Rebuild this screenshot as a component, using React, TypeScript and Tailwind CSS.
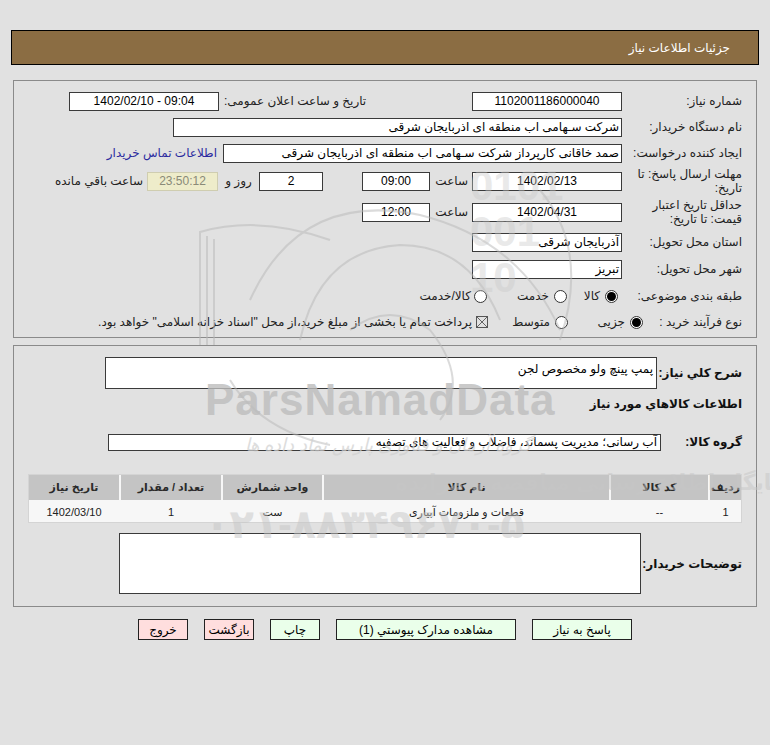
import React from "react";

function Box({ className = "", children, ltr }: { className?: string; children?: React.ReactNode; ltr?: boolean }) {
  return (
    <div dir={ltr ? "ltr" : undefined} className={`shrink-0 h-[19px] bg-white border border-[#3a3a3a] flex items-center text-[12px] text-black whitespace-nowrap overflow-hidden ${className}`}>
      {children}
    </div>
  );
}

function Radio({ checked }: { checked?: boolean }) {
  return (
    <span className="w-[13px] h-[13px] rounded-full border border-[#333] bg-white flex items-center justify-center shrink-0">
      {checked ? <span className="w-[9px] h-[9px] rounded-full bg-black block" /> : null}
    </span>
  );
}

function Label({ className = "", children }: { className?: string; children?: React.ReactNode }) {
  return <div className={`shrink-0 text-[12px] text-[#222] leading-[14px] whitespace-nowrap ${className}`}>{children}</div>;
}

export default function App() {
  return (
    <div dir="rtl" className="relative w-[770px] h-[745px] bg-[#e1e1e1] pt-[30px] font-['Liberation_Sans','DejaVu_Sans',sans-serif] overflow-hidden">
      {/* header */}
      <div className="mx-[11px] h-[35px] bg-[#8b6d43] border border-black flex items-center pr-[28px] text-[12px] text-white">
        جزئیات اطلاعات نیاز
      </div>

      {/* panel 1 */}
      <div className="mt-[15px] mx-[13px] border border-[#8a8a8a] pt-[7px] pb-[3px] pr-[14px]">
        {/* row 1 */}
        <div className="h-[26px] flex items-center pl-[55px]">
          <Label className="w-[120px]">شماره نیاز:</Label>
          <Box className="w-[150px] justify-center">1102001186000040</Box>
          <div className="ms-auto flex items-center">
            <Label className="ml-[5px]">تاریخ و ساعت اعلان عمومی:</Label>
            <Box ltr className="w-[150px] justify-center">1402/02/10 - 09:04</Box>
          </div>
        </div>
        {/* row 2 */}
        <div className="h-[26px] flex items-center">
          <Label className="w-[120px]">نام دستگاه خریدار:</Label>
          <Box className="w-[449px] pr-[2px]">شرکت سـهامی اب منطقه ای اذربایجان شرقی</Box>
        </div>
        {/* row 3 */}
        <div className="h-[26px] flex items-center">
          <Label className="w-[120px]">ایجاد کننده درخواست:</Label>
          <Box className="w-[399px] pr-[2px]">صمد خاقانی کارپرداز شرکت سـهامی اب منطقه ای اذربایجان شرقی</Box>
          <span className="mr-[6px] text-[12px] text-[#2b2b9f] whitespace-nowrap">اطلاعات تماس خریدار</span>
        </div>
        {/* row 4 */}
        <div className="h-[30px] flex items-center whitespace-nowrap">
          <Label className="w-[120px]">
            مهلت ارسال پاسخ: تا
            <br />
            تاریخ:
          </Label>
          <Box className="w-[150px] justify-center">1402/02/13</Box>
          <div className="shrink-0 w-[42px] text-[12px] text-[#222] pr-[4px]">ساعت</div>
          <Box className="w-[68px] justify-center">09:00</Box>
          <Box className="w-[64px] mr-[39px] justify-center">2</Box>
          <div className="shrink-0 w-[41px] text-[12px] text-[#222] text-center">روز و</div>
          <div className="shrink-0 h-[19px] w-[71px] bg-[#eeecca] border border-[#cfcdb0] flex items-center justify-center text-[12px] text-[#8a8a78]">23:50:12</div>
          <div className="shrink-0 mr-[4px] text-[12px] text-[#222]">ساعت باقي مانده</div>
        </div>
        {/* row 5 */}
        <div className="h-[32px] flex items-center">
          <Label className="w-[120px]">
            حداقل تاریخ اعتبار
            <br />
            قیمت: تا تاریخ:
          </Label>
          <Box className="w-[150px] justify-center">1402/04/31</Box>
          <div className="shrink-0 w-[42px] text-[12px] text-[#222] pr-[4px]">ساعت</div>
          <Box className="w-[68px] justify-center">12:00</Box>
        </div>
        {/* row 6 */}
        <div className="h-[28px] flex items-center">
          <Label className="w-[120px]">استان محل تحویل:</Label>
          <Box className="w-[150px] pr-[2px]">آذربایجان شرقی</Box>
        </div>
        {/* row 7 */}
        <div className="h-[26px] flex items-center">
          <Label className="w-[120px]">شهر محل تحویل:</Label>
          <Box className="w-[150px] pr-[2px]">تبریز</Box>
        </div>
        {/* row 8 */}
        <div className="h-[28px] flex items-center text-[12px] text-[#222] whitespace-nowrap">
          <Label className="w-[124px]">طبقه بندی موضوعی:</Label>
          <Radio checked />
          <span className="mr-[5px] w-[33px]">کالا</span>
          <Radio />
          <span className="mr-[5px] w-[62px]">خدمت</span>
          <Radio />
          <span className="mr-[3px]">کالا/خدمت</span>
        </div>
        {/* row 9 */}
        <div className="h-[24px] flex items-center text-[12px] text-[#222] whitespace-nowrap">
          <Label className="w-[99px]">نوع فرآیند خرید :</Label>
          <Radio checked />
          <span className="mr-[5px] w-[57px]">جزیی</span>
          <Radio />
          <span className="mr-[5px] w-[62px]">متوسط</span>
          <svg width="12" height="12" viewBox="0 0 12 12" className="shrink-0">
            <rect x="0.5" y="0.5" width="11" height="11" fill="none" stroke="#555" />
            <path d="M1 1L11 11M11 1L1 11" stroke="#555" strokeWidth="0.9" />
          </svg>
          <span className="mr-[4px]">پرداخت تمام یا بخشی از مبلغ خرید،از محل "اسناد خزانه اسلامی" خواهد بود.</span>
        </div>
      </div>

      {/* panel 2 */}
      <div className="mt-[7px] mx-[13px] border border-[#8a8a8a] pt-[11px] pb-[12px]">
        <div className="flex items-center pr-[14px]">
          <div className="w-[85px] shrink-0 text-[12px] font-bold text-[#111] whitespace-nowrap">شرح کلي نیاز:</div>
          <div className="shrink-0 w-[552px] h-[32px] bg-white border border-[#3a3a3a] text-[12px] pr-[3px] pt-[4px] leading-[14px]">پمپ پینچ ولو مخصوص لجن</div>
        </div>
        <div className="h-[30px] flex items-center pr-[14px] text-[12px] font-bold text-[#111] whitespace-nowrap">اطلاعات کالاهاي مورد نیاز</div>
        <div className="mt-[14px] flex items-center pr-[14px]">
          <div className="w-[81px] shrink-0 text-[12px] font-bold text-[#111] whitespace-nowrap">گروه کالا:</div>
          <div className="shrink-0 w-[553px] h-[17px] bg-white border border-[#3a3a3a] flex items-center text-[12px] pr-[3px] whitespace-nowrap">آب رسانی؛ مدیریت پسماند، فاضلاب و فعالیت های تصفیه</div>
        </div>
        {/* table */}
        <div className="mt-[23px] mx-[14px] grid grid-cols-[31px_97px_285px_99px_100px_1fr] gap-[2px] bg-[#f7f7f7] border border-[#d4d4d4] text-[11px]">
          {["ردیف", "کد کالا", "نام کالا", "واحد شمارش", "تعداد / مقدار", "تاریخ نیاز"].map((h) => (
            <div key={h} className="h-[25px] bg-[#c4c4c4] flex items-center justify-center font-bold text-[#2a2a2a] whitespace-nowrap">
              {h}
            </div>
          ))}
          {["1", "--", "قطعات و ملزومات آبیاری", "ست", "1", "1402/03/10"].map((c, i) => (
            <div key={i} className="h-[20px] bg-[#f7f7f7] flex items-center justify-center text-[#222] whitespace-nowrap">
              {c}
            </div>
          ))}
        </div>
        <div className="mt-[10px] flex items-center pr-[14px]">
          <div className="w-[101px] shrink-0 text-[12px] font-bold text-[#111] whitespace-nowrap">توضیحات خریدار:</div>
          <div className="shrink-0 w-[522px] h-[61px] bg-white border border-[#3a3a3a]" />
        </div>
      </div>

      {/* buttons */}
      <div className="mt-[12px] flex justify-center gap-[16px] text-[12px] text-black">
        <div className="w-[100px] h-[21px] bg-[#eaffea] border border-[#222] flex items-center justify-center">پاسخ به نیاز</div>
        <div className="w-[180px] h-[21px] bg-[#eaffea] border border-[#222] flex items-center justify-center">مشاهده مدارک پیوستي (1)</div>
        <div className="w-[50px] h-[21px] bg-[#eaffea] border border-[#222] flex items-center justify-center">چاپ</div>
        <div className="w-[50px] h-[21px] bg-[#ffdede] border border-[#222] flex items-center justify-center">بازگشت</div>
        <div className="w-[50px] h-[21px] bg-[#ffdede] border border-[#222] flex items-center justify-center">خروج</div>
      </div>

      {/* watermark overlay */}
      <div className="pointer-events-none absolute inset-0">
        <svg width="770" height="745" className="absolute inset-0 opacity-50">
          <g fill="none" stroke="#b8b8b8" strokeWidth="2">
            <path d="M200 345 L200 232 Q 260 215 330 240" />
            <path d="M207 345 L207 236" />
            <path d="M214 345 L214 239" />
            <path d="M250 300 Q 300 190 420 215 Q 520 240 560 330" />
            <path d="M300 340 Q 320 250 400 245 Q 470 245 500 320" />
            <path d="M350 330 Q 390 300 430 330 Q 470 380 440 420" />
            <path d="M230 380 Q 260 430 330 445" />
            <path d="M560 340 Q 590 250 540 190" />
          </g>
        </svg>
        <div className="absolute left-[470px] top-[163px] text-[42px] leading-[46px] font-bold text-[#c9c9c9] opacity-40 font-['Liberation_Sans',sans-serif] text-left whitespace-nowrap" dir="ltr">
          0101
          <br />
          001
          <br />
          10
        </div>
        <div className="absolute left-[205px] top-[376px] text-[44px] leading-[48px] font-bold text-[#bdbdbd] opacity-80 font-['Liberation_Sans',sans-serif] tracking-[1px] whitespace-nowrap" dir="ltr">
          ParsNamadData
        </div>
        <div className="absolute left-[245px] top-[432px] text-[18px] italic text-[#cfcfcf] opacity-70 whitespace-nowrap">گروه آرمان و فناوری پارس نماد داده ها</div>
        <div className="absolute left-[395px] top-[466px] text-[22px] font-bold text-[#c6c6c6] opacity-50 whitespace-nowrap">پایگاه اطلاع رسانی مناقصه و مزایده</div>
        <div className="absolute left-[205px] top-[494px] text-[40px] font-bold text-[#c6c6c6] opacity-50 whitespace-nowrap" dir="ltr">۰۲۱-۸۸۳۴۹۶۷۰-۵</div>
      </div>
    </div>
  );
}
